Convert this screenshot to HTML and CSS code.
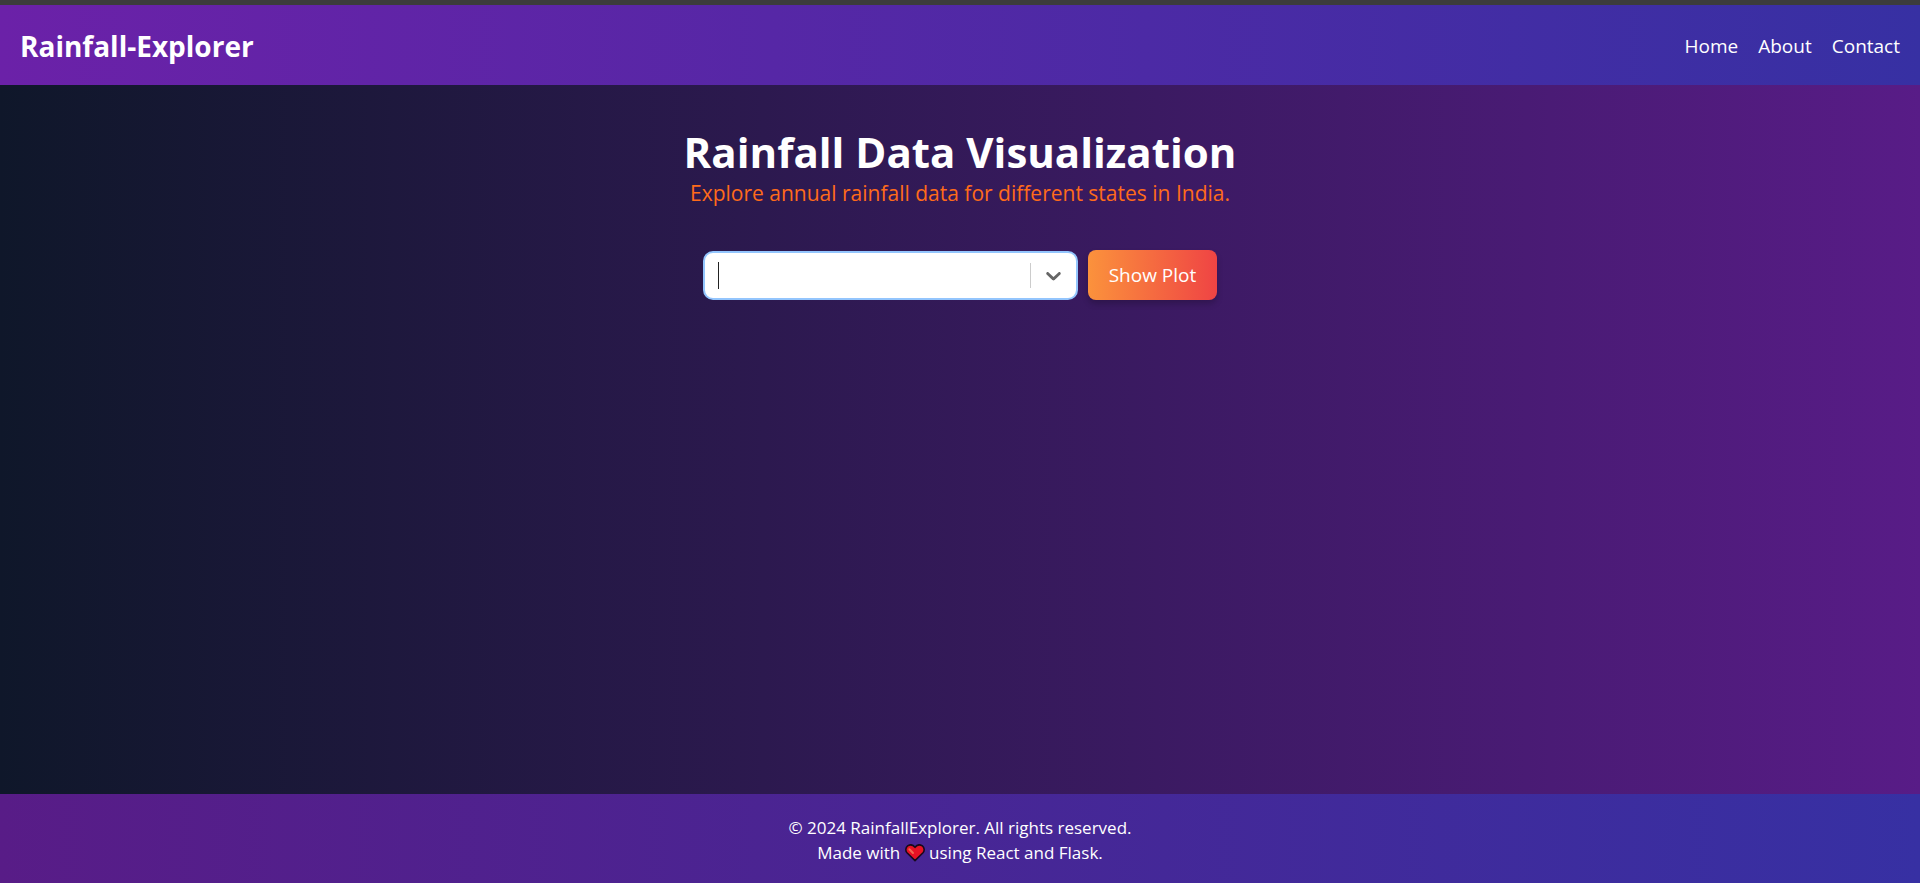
FILE: index.html
```html
<!DOCTYPE html>
<html lang="en">
<head>
<meta charset="utf-8">
<title>Rainfall-Explorer</title>
<link rel="stylesheet" href="styles.css">
</head>
<body>
<header class="site-header">
  <div class="brand">Rainfall-Explorer</div>
  <nav class="nav">
    <a href="#home">Home</a>
    <a href="#about">About</a>
    <a href="#contact">Contact</a>
  </nav>
</header>
<main class="main">
  <h1 class="title">Rainfall Data Visualization</h1>
  <p class="subtitle">Explore annual rainfall data for different states in India.</p>
  <form class="controls">
    <div class="select">
      <span class="caret"></span>
      <input class="select-input" type="text" role="combobox" aria-label="State" aria-expanded="false">
      <span class="separator"></span>
      <button class="toggle" type="button" aria-label="Show states">
        <svg viewBox="0 0 20 20" width="25" height="25" aria-hidden="true"><path fill="currentColor" d="M4.516 7.548c0.436-0.446 1.043-0.481 1.576 0l3.908 3.747 3.908-3.747c0.533-0.481 1.141-0.446 1.574 0 0.436 0.445 0.408 1.197 0 1.615-0.406 0.418-4.695 4.502-4.695 4.502-0.217 0.223-0.502 0.335-0.787 0.335s-0.57-0.112-0.789-0.335c0 0-4.287-4.084-4.695-4.502s-0.436-1.17 0-1.615z"/></svg>
      </button>
    </div>
    <button class="plot-button" type="button">Show Plot</button>
  </form>
</main>
<footer class="site-footer">
  <p>© 2024 RainfallExplorer. All rights reserved.</p>
  <p>Made with <svg class="heart" viewBox="0 0 20 18" width="20" height="18" role="img" aria-label="love"><path d="M10 16.6 2 8.8C.2 6.8.6 3.4 2.6 1.9 5 .2 8 .9 10 3.3 12 .9 15 .2 17.4 1.9c2 1.5 2.4 4.9.6 6.9z" fill="#e81224" stroke="#180a1c" stroke-width="1.6" stroke-linejoin="round"/><path d="M4.4 5.2 8 9" stroke="#f4664f" stroke-width="2" stroke-linecap="round"/></svg> using React and Flask.</p>
</footer>
</body>
</html>
```
FILE: styles.css
```css
* {
  box-sizing: border-box;
  margin: 0;
  padding: 0;
}

body {
  display: flex;
  flex-direction: column;
  min-height: 100vh;
  border-top: 5px solid #3c3c3c;
  background: linear-gradient(to right, #0f172a, #581c87);
  color: #fff;
  font-family: "Open Sans", "Noto Sans", sans-serif;
  font-size: 19px;
}

input,
button {
  border: 0;
  background: none;
  color: inherit;
  font: inherit;
}

.site-header {
  display: flex;
  align-items: center;
  justify-content: space-between;
  height: 80px;
  padding: 2px 20px 0;
  background: linear-gradient(to right, #6b21a8, #3730a3);
}

.brand {
  font-size: 28px;
  font-weight: 700;
}

.nav {
  display: flex;
  gap: 20px;
}

.nav a {
  color: inherit;
  text-decoration: none;
}

.main {
  display: flex;
  flex: 1;
  flex-direction: column;
  align-items: center;
  padding: 42px 20px;
}

.title {
  font-size: 42px;
  font-weight: 700;
  line-height: 50px;
}

.subtitle {
  color: #ff6b1a;
  font-size: 21px;
  line-height: 33px;
}

.controls {
  display: flex;
  align-items: flex-end;
  gap: 10px;
  margin-top: 40px;
}

.select {
  display: flex;
  align-items: center;
  width: 375px;
  height: 49px;
  padding-left: 13px;
  border: 2px solid #93c5fd;
  border-radius: 10px;
  background: #fff;
  color: #333;
}

.caret {
  width: 1px;
  height: 27px;
  background: #222;
}

.select-input {
  flex: 1;
  min-width: 0;
  outline: none;
}

.separator {
  width: 1px;
  height: 25px;
  background: #ccc;
}

.toggle {
  display: flex;
  padding: 10px;
  color: #666;
}

.plot-button {
  height: 50px;
  padding: 0 21px;
  border-radius: 8px;
  background: linear-gradient(to right, #fb923c, #ef4444);
  box-shadow: 0 4px 6px rgba(0, 0, 0, 0.2);
}

.site-footer {
  padding: 21px 20px 18px;
  background: linear-gradient(to right, #581c87, #3730a3);
  font-size: 17px;
  line-height: 25px;
  text-align: center;
}

.heart {
  vertical-align: -3px;
}
```
